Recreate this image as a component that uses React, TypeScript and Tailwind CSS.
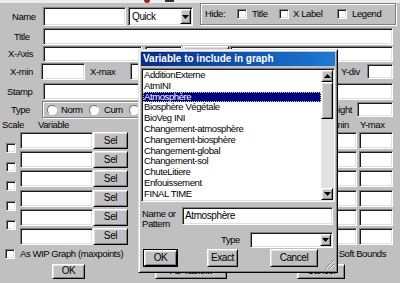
import React from 'react';

const sunken =
  'bg-white border border-t-[#808080] border-l-[#808080] border-r-white border-b-white shadow-[inset_1px_1px_#1c1c1c,inset_-1px_-1px_#dfdfdf] p-[1px]';
const raised =
  'flex items-center justify-center bg-[#c0c0c0] border border-t-white border-l-white border-r-black border-b-black shadow-[inset_1px_1px_#dfdfdf,inset_-1px_-1px_#808080]';
const etched = 'border border-[#808080] shadow-[inset_1px_1px_#ffffff,1px_1px_#ffffff]';

const Down = () => (
  <svg width="7" height="4" viewBox="0 0 7 4">
    <path d="M0 0h7L3.5 4z" fill="#000" />
  </svg>
);

const Up = () => (
  <svg width="7" height="4" viewBox="0 0 7 4">
    <path d="M0 4h7L3.5 0z" fill="#000" />
  </svg>
);

const Check = () => <div className={`${sunken} w-[10px] h-[10px] shrink-0`} />;

const Radio = () => (
  <div className="w-[10px] h-[10px] shrink-0 rounded-full bg-white border border-t-[#707070] border-l-[#707070] border-r-white border-b-white" />
);

const items = [
  'AdditionExterne',
  'AtmINI',
  'Atmosphère',
  'Biosphère Végétale',
  'BioVeg INI',
  'Changement-atmosphère',
  'Changement-biosphère',
  'Changement-global',
  'Changement-sol',
  'ChuteLitiere',
  'Enfouissement',
  'FINAL TIME',
];

const App: React.FC = () => {
  return (
    <div className="relative w-[400px] h-[283px] overflow-hidden bg-[#c0c0c0] text-black text-[9.5px] tracking-[-0.4px] leading-none font-['Liberation_Sans',Arial,sans-serif]">
      {/* strip of the window above */}
      <div className="flex h-[3px] bg-[#ececec]">
        <div className="ml-[144px] w-[6px] h-[3px] rounded-b-full bg-[#9a2020]" />
        <div className="ml-[15px] w-[9px] h-[2px] bg-[#303030]" />
      </div>

      {/* Name + Hide */}
      <div className="flex h-[24px]">
        <div className="flex items-start pt-[4px]">
          <span className="w-[43px] pl-[12px] leading-[19px]">Name</span>
          <div className={`${sunken} w-[83px] h-[19px]`} />
          <div className={`${sunken} ml-[2px] w-[65px] h-[19px] flex items-center`}>
            <span className="flex-1 pl-[2px] text-[10px]">Quick</span>
            <div className={`${raised} w-[11px] h-full`}>
              <Down />
            </div>
          </div>
        </div>
        <div className={`${etched} ml-[7px] w-[196px] h-[22px] flex items-center pl-[4px]`}>
          <span className="w-[32px]">Hide:</span>
          <Check />
          <span className="ml-[5px] w-[27px]">Title</span>
          <Check />
          <span className="ml-[4px] w-[44px]">X Label</span>
          <Check />
          <span className="ml-[5px]">Legend</span>
        </div>
      </div>

      {/* Title */}
      <div className="flex items-center mt-[1px] h-[17px]">
        <span className="w-[43px] pl-[14px]">Title</span>
        <div className={`${sunken} w-[350px] h-full`} />
      </div>

      {/* X-Axis */}
      <div className="flex items-center mt-[1px] h-[16px]">
        <span className="w-[43px] pl-[8px]">X-Axis</span>
        <div className={`${sunken} w-[99px] h-full`} />
        <div className={`${sunken} ml-[3px] w-[37px] h-full`} />
        <div className={`${raised} ml-[1px] w-[46px] h-full`} />
        <div className={`${sunken} ml-[1px] w-[163px] h-full`} />
      </div>

      {/* X-min / X-max / Y-div */}
      <div className="flex items-center mt-[1px] h-[17px]">
        <span className="w-[41px] pl-[10px]">X-min</span>
        <div className={`${sunken} w-[44px] h-full`} />
        <span className="w-[45px] pl-[5px]">X-max</span>
        <div className={`${sunken} w-[60px] h-full`} />
        <div className="flex-1" />
        <span className="w-[26px]">Y-div</span>
        <div className={`${sunken} w-[26px] h-[15px] mr-[7px]`} />
      </div>

      {/* Stamp */}
      <div className="flex items-center mt-[3px] h-[17px]">
        <span className="w-[43px] pl-[7px]">Stamp</span>
        <div className={`${sunken} w-[350px] h-full`} />
      </div>

      {/* Type / Height */}
      <div className="flex items-center mt-[1px] h-[17px]">
        <span className="w-[42px] pl-[11px]">Type</span>
        <div className={`${etched} w-[140px] h-full flex items-center pl-[4px]`}>
          <Radio />
          <span className="ml-[4px] w-[28px]">Norm</span>
          <Radio />
          <span className="ml-[5px] w-[25px]">Cum</span>
          <Radio />
          <span className="ml-[4px]">Diff</span>
        </div>
        <div className="flex-1" />
        <span className="pr-[5px]">Height</span>
        <div className={`${sunken} w-[36px] h-[15px] mr-[7px]`} />
      </div>

      {/* column headings */}
      <div className="flex items-center h-[14px]">
        <span className="w-[38px] pl-[2px]">Scale</span>
        <span>Variable</span>
        <div className="flex-1" />
        <span className="w-[33px]">Y-min</span>
        <span className="w-[40px]">Y-max</span>
      </div>

      {/* variable rows */}
      <div className="flex">
        <div className="w-[20px] flex flex-col pt-[11px] pl-[6px] gap-[9.2px]">
          {[0, 1, 2, 3, 4].map((i) => (
            <Check key={i} />
          ))}
        </div>
        <div className="flex-1 flex flex-col gap-[2.2px]">
          {[0, 1, 2, 3, 4, 5].map((i) => (
            <div key={i} className="flex h-[17px]">
              <div className={`${sunken} w-[73px] h-full`} />
              <div className={`${raised} w-[35px] h-full text-[10px]`}>Sel</div>
              <div className="flex-1" />
              <div className={`${sunken} w-[37px] h-full`} />
              <div className={`${sunken} ml-[2px] w-[34px] h-full mr-[7px]`} />
            </div>
          ))}
        </div>
      </div>

      {/* WIP / Soft bounds */}
      <div className="flex items-center mt-[3px] h-[12px]">
        <div className="pl-[5px]">
          <Check />
        </div>
        <span className="ml-[5px]">As WIP Graph (maxpoints)</span>
        <div className="flex-1" />
        <Check />
        <span className="ml-[3px] mr-[14px]">Soft Bounds</span>
      </div>

      {/* main buttons */}
      <div className="flex mt-[4px] h-[15px] text-[10px]">
        <div className={`${raised} ml-[52px] w-[33px] h-full`}>OK</div>
        <div className={`${raised} ml-[70px] w-[72px] h-full`}>As Table...</div>
        <div className={`${raised} ml-[70px] w-[48px] h-full`}>Cancel</div>
      </div>

      {/* dialog */}
      <div className="absolute left-[138px] top-[49px] w-[200px] h-[224px] bg-[#c0c0c0] border border-t-[#dfdfdf] border-l-[#dfdfdf] border-r-black border-b-black shadow-[inset_1px_1px_#ffffff,inset_-1px_-1px_#808080] p-[2px] flex flex-col">
        <div className="h-[14px] shrink-0 flex items-center pl-[2px] bg-gradient-to-r from-[#0a2a88] to-[#1c7ad6] text-white font-bold text-[10px] tracking-normal">
          Variable to include in graph
        </div>

        <div className={`${sunken} mt-[2px] h-[134px] shrink-0 flex`}>
          <div className="flex-1 flex flex-col overflow-hidden">
            {items.map((it) => (
              <div
                key={it}
                className={`h-[10.8px] leading-[10.8px] pl-[1px] whitespace-nowrap ${
                  it === 'Atmosphère'
                    ? 'bg-[#000080] text-white outline outline-1 outline-dotted outline-[#d0d080] -outline-offset-1'
                    : ''
                }`}
              >
                {it}
              </div>
            ))}
          </div>
          <div className="w-[12px] flex flex-col">
            <div className={`${raised} h-[12px]`}>
              <Up />
            </div>
            <div className={`${raised} h-[37px]`} />
            <div className="flex-1 bg-[#e2e2e2]" />
            <div className={`${raised} h-[12px]`}>
              <Down />
            </div>
          </div>
        </div>

        <div className="flex mt-[5px] h-[18px] shrink-0">
          <div className="w-[41px] pl-[1px] pt-[2px] leading-[10px]">
            Name or
            <br />
            Pattern
          </div>
          <div className={`${sunken} w-[151px] h-full flex items-center pl-[2px] text-[10px]`}>Atmosphère</div>
        </div>

        <div className="flex items-center mt-[7px] h-[16px] shrink-0">
          <span className="w-[109px] text-right pr-[10px]">Type</span>
          <div className={`${sunken} w-[83px] h-full flex justify-end`}>
            <div className={`${raised} w-[11px] h-full`}>
              <Down />
            </div>
          </div>
        </div>

        <div className="flex mt-[1px] h-[18px] shrink-0 text-[10px]">
          <div className="ml-[2px] w-[35px] h-full border border-black">
            <div className={`${raised} w-full h-full`}>OK</div>
          </div>
          <div className={`${raised} ml-[29px] w-[31px] h-full`}>Exact</div>
          <div className={`${raised} ml-[32px] w-[48px] h-full`}>Cancel</div>
        </div>

        <svg className="absolute right-[2px] bottom-[2px]" width="11" height="11" viewBox="0 0 11 11">
          <path d="M10 1L1 10M10 5L5 10M10 9L9 10" stroke="#808080" strokeWidth="1" />
          <path d="M10 2L2 10M10 6L6 10" stroke="#ffffff" strokeWidth="1" />
        </svg>
      </div>
    </div>
  );
};

export default App;
